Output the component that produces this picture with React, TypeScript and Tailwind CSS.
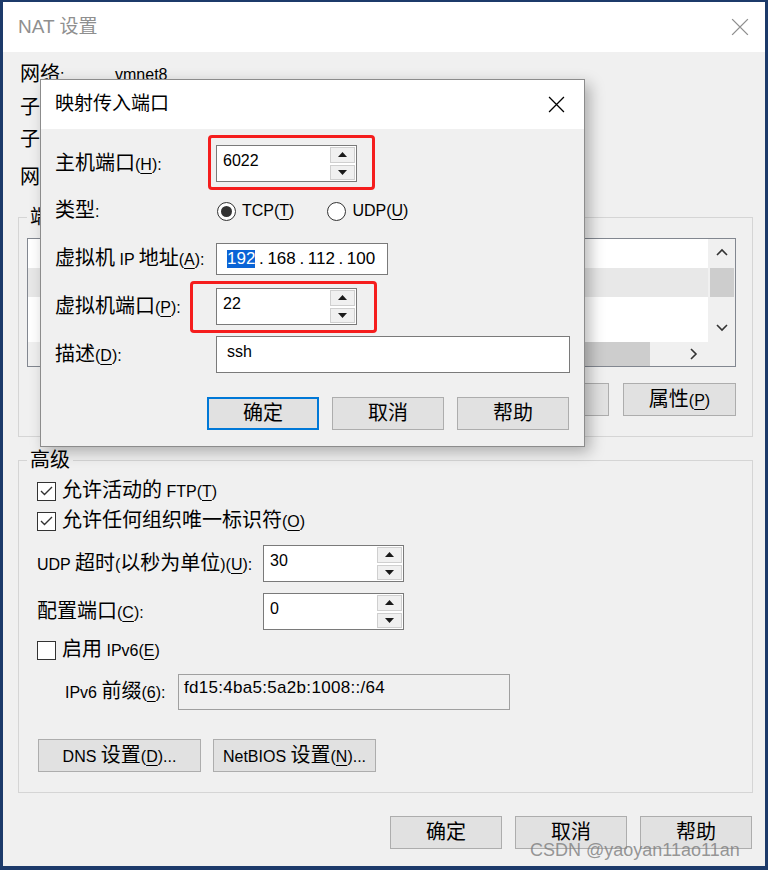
import clsx from "clsx";

const FONT = "font-['Liberation_Sans','Noto_Sans_CJK_SC',sans-serif]";

const isCJK = (c: string) => /[\u2e80-\u9fff\uff00-\uffef]/.test(c);

// "_X" marks an underlined access key; CJK runs get the larger size
function Txt({ s }: { s: string }) {
  const parts: { t: string; cjk: boolean; u: boolean }[] = [];
  for (let i = 0; i < s.length; i++) {
    let c = s[i];
    let u = false;
    if (c === "_" && i + 1 < s.length) {
      u = true;
      c = s[++i];
    }
    const cjk = isCJK(c);
    const last = parts[parts.length - 1];
    if (last && last.cjk === cjk && last.u === u) last.t += c;
    else parts.push({ t: c, cjk, u });
  }
  return (
    <span>
      {parts.map((p, i) => (
        <span
          key={i}
          className={clsx(
            p.cjk ? "text-[20px]" : "text-[16px]",
            p.u && "underline underline-offset-[3px]"
          )}
        >
          {p.t}
        </span>
      ))}
    </span>
  );
}

function XIcon({ color = "#000", size = 16 }: { color?: string; size?: number }) {
  return (
    <svg width={size} height={size} viewBox="0 0 16 16">
      <path d="M1 1L15 15M15 1L1 15" stroke={color} strokeWidth="1.2" fill="none" />
    </svg>
  );
}

function Tri({ up }: { up?: boolean }) {
  return (
    <svg width="9" height="5" viewBox="0 0 9 5">
      <polygon points={up ? "0,5 9,5 4.5,0" : "0,0 9,0 4.5,5"} fill="#1a1a1a" />
    </svg>
  );
}

function Chev({ dir }: { dir: "up" | "down" | "right" }) {
  const pts = dir === "up" ? "1,7 6,2 11,7" : dir === "down" ? "1,3 6,8 11,3" : "3,1 8,6 3,11";
  return (
    <svg width="12" height="12" viewBox="0 0 12 12">
      <polyline points={pts} fill="none" stroke="#333" strokeWidth="1.6" />
    </svg>
  );
}

function Spin({ value }: { value: string }) {
  return (
    <div className="flex h-[37px] w-[141px] border border-[#7a7a7a] bg-white">
      <div className="flex-1 pl-[6px] pt-[5px] text-[16px] leading-[20px]">{value}</div>
      <div className="flex w-[26px] flex-col gap-[2px] py-[1px] pr-[1px]">
        <div className="flex flex-1 items-center justify-center border border-[#cfcfcf] bg-[#f0f0f0]">
          <Tri up />
        </div>
        <div className="flex flex-1 items-center justify-center border border-[#cfcfcf] bg-[#f0f0f0]">
          <Tri />
        </div>
      </div>
    </div>
  );
}

function Btn({ s, w = "w-[112px]", focus }: { s: string; w?: string; focus?: boolean }) {
  return (
    <button
      type="button"
      className={clsx(
        "flex h-[33px] items-center justify-center bg-[#e1e1e1] leading-[24px]",
        w,
        focus ? "border-2 border-[#0078d7]" : "border border-[#adadad]"
      )}
    >
      <Txt s={s} />
    </button>
  );
}

function Check({ on }: { on?: boolean }) {
  return (
    <span className="flex h-[19px] w-[19px] shrink-0 items-center justify-center border border-[#333] bg-white">
      {on && (
        <svg width="13" height="10" viewBox="0 0 13 10">
          <polyline points="1,5 4.5,8.5 12,1" fill="none" stroke="#333" strokeWidth="1.4" />
        </svg>
      )}
    </span>
  );
}

function Radio({ on }: { on?: boolean }) {
  return (
    <span className="flex h-[19px] w-[19px] shrink-0 items-center justify-center rounded-full border border-[#333] bg-white">
      {on && <span className="h-[11px] w-[11px] rounded-full bg-[#333]" />}
    </span>
  );
}

const infoRows = [
  { label: "网络:", value: "vmnet8", mt: "mt-[8px]" },
  { label: "子网 IP:", value: "192.168.112.0", mt: "mt-[3px]" },
  { label: "子网掩码:", value: "255.255.255.0", mt: "mt-[2px]" },
  { label: "网关 IP(_G):", value: "192.168.112.2", mt: "mt-[8px]" },
];

export default function App() {
  return (
    <div className={clsx("relative h-[870px] w-[768px] overflow-hidden bg-[#1c3a6a] pl-[3px] pt-[2px] text-black", FONT)}>
      {/* NAT window */}
      <div className="flex h-[864px] w-[762px] flex-col bg-[#f0f0f0]">
        <div className="flex h-[50px] shrink-0 items-center justify-between bg-white pl-[15px] pr-[16px]">
          <span className="text-[19px] text-[#8f8f8f]">NAT 设置</span>
          <XIcon color="#8f8f8f" size={18} />
        </div>

        <div className="flex flex-col pl-[17px]">
          {infoRows.map((r) => (
            <div key={r.label} className={clsx("flex h-[30px] items-center leading-[24px]", r.mt)}>
              <span className="w-[95px]">
                <Txt s={r.label} />
              </span>
              <span className="text-[16px]">{r.value}</span>
            </div>
          ))}
        </div>

        {/* port forwarding group */}
        <fieldset className="ml-[15px] mt-[12px] w-[735px] border border-[#d5d5d5] pb-[20px]">
          <legend className="ml-[8px] h-[24px] px-[3px] leading-[24px]">
            <Txt s="端口转发(_F)" />
          </legend>
          <div className="ml-[8px] mr-[16px] mt-[9px] flex h-[129px] flex-col border border-[#828790] bg-white">
            <div className="flex flex-1">
              <div className="flex flex-1 flex-col">
                <div className="h-[29px]" />
                <div className="h-[29px] bg-[#e8e8e8]" />
                <div className="flex-1" />
              </div>
              <div className="flex w-[27px] flex-col items-center bg-[#f0f0f0]">
                <div className="flex h-[29px] items-center">
                  <Chev dir="up" />
                </div>
                <div className="h-[29px] w-[24px] bg-[#cdcdcd]" />
                <div className="flex-1" />
                <div className="flex h-[29px] items-center">
                  <Chev dir="down" />
                </div>
              </div>
            </div>
            <div className="flex h-[24px] bg-[#f0f0f0]">
              <div className="ml-[24px] w-[598px] bg-[#cdcdcd]" />
              <div className="flex-1" />
              <div className="flex w-[27px] items-center justify-center">
                <Chev dir="right" />
              </div>
              <div className="w-[28px]" />
            </div>
          </div>
          <div className="mt-[16px] flex justify-end gap-[14px] pr-[16px]">
            <Btn s="添加(_A)..." w="w-[113px]" />
            <Btn s="移除(_R)" w="w-[113px]" />
            <Btn s="属性(_P)" w="w-[113px]" />
          </div>
        </fieldset>

        {/* advanced group */}
        <fieldset className="ml-[15px] mt-[11px] w-[735px] border border-[#d5d5d5] pb-[20px] pl-[18px]">
          <legend className="ml-[-10px] h-[24px] px-[3px] leading-[24px]">
            <Txt s="高级" />
          </legend>
          <div className="mt-[6px] flex h-[26px] items-center gap-[6px] leading-[24px]">
            <Check on />
            <Txt s="允许活动的 FTP(_T)" />
          </div>
          <div className="mt-[4px] flex h-[26px] items-center gap-[6px] leading-[24px]">
            <Check on />
            <Txt s="允许任何组织唯一标识符(_O)" />
          </div>
          <div className="mt-[11px] flex items-center leading-[24px]">
            <span className="w-[226px]">
              <Txt s="UDP 超时(以秒为单位)(_U):" />
            </span>
            <Spin value="30" />
          </div>
          <div className="mt-[11px] flex items-center leading-[24px]">
            <span className="w-[226px]">
              <Txt s="配置端口(_C):" />
            </span>
            <Spin value="0" />
          </div>
          <div className="mt-[7px] flex h-[26px] items-center gap-[6px] leading-[24px]">
            <Check />
            <Txt s="启用 IPv6(_E)" />
          </div>
          <div className="mt-[11px] flex h-[36px] items-center pl-[28px] leading-[24px]">
            <span className="w-[113px]">
              <Txt s="IPv6 前缀(_6):" />
            </span>
            <div className="h-[36px] w-[332px] border border-[#a0a0a0] bg-[#f0f0f0] pl-[5px] pt-[3px] text-[17px] leading-[20px] tracking-[0.3px]">
              fd15:4ba5:5a2b:1008::/64
            </div>
          </div>
          <div className="ml-[1px] mt-[29px] flex gap-[12px]">
            <Btn s="DNS 设置(_D)..." w="w-[163px]" />
            <Btn s="NetBIOS 设置(_N)..." w="w-[163px]" />
          </div>
        </fieldset>

        <div className="mt-[23px] flex justify-end gap-[13px] pr-[13px]">
          <Btn s="确定" />
          <Btn s="取消" />
          <Btn s="帮助" />
        </div>
      </div>

      {/* port mapping dialog */}
      <div className="absolute left-[40px] top-[79px] flex h-[368px] w-[545px] flex-col border border-[#8c8c8c] bg-[#f0f0f0] shadow-[5px_5px_14px_rgba(0,0,0,0.28)]">
        <div className="flex h-[49px] shrink-0 items-center justify-between bg-white pl-[14px] pr-[19px]">
          <span className="text-[19px]">映射传入端口</span>
          <XIcon size={17} />
        </div>
        <div className="flex flex-col pl-[14px] pr-[14px] pt-[16px] leading-[24px]">
          <div className="flex h-[37px] items-center">
            <span className="w-[161px]">
              <Txt s="主机端口(_H):" />
            </span>
            <Spin value="6022" />
          </div>
          <div className="mt-[5px] flex h-[48px] items-center">
            <span className="w-[162px]">
              <Txt s="类型:" />
            </span>
            <span className="flex items-center gap-[6px]">
              <Radio on />
              <Txt s="TCP(_T)" />
            </span>
            <span className="ml-[33px] flex items-center gap-[6px]">
              <Radio />
              <Txt s="UDP(_U)" />
            </span>
          </div>
          <div className="mt-[8px] flex h-[32px] items-center">
            <span className="w-[161px]">
              <Txt s="虚拟机 IP 地址(_A):" />
            </span>
            <div className="flex h-[32px] w-[172px] items-center border border-[#7a7a7a] bg-white pl-[10px] text-[17px] leading-[18px]">
              <span className="bg-[#0a64d6] text-white">192</span>
              <span className="w-[12px] text-center">.</span>
              <span>168</span>
              <span className="w-[12px] text-center">.</span>
              <span>112</span>
              <span className="w-[12px] text-center">.</span>
              <span>100</span>
            </div>
          </div>
          <div className="mt-[13px] flex h-[37px] items-center">
            <span className="w-[161px]">
              <Txt s="虚拟机端口(_P):" />
            </span>
            <Spin value="22" />
          </div>
          <div className="mt-[11px] flex h-[37px] items-center">
            <span className="w-[161px]">
              <Txt s="描述(_D):" />
            </span>
            <div className="h-[37px] w-[354px] border border-[#7a7a7a] bg-white pl-[10px] pt-[5px] text-[16px] leading-[20px]">
              ssh
            </div>
          </div>
          <div className="mt-[24px] flex justify-end gap-[13px] pr-[1px]">
            <Btn s="确定" focus />
            <Btn s="取消" />
            <Btn s="帮助" />
          </div>
        </div>
      </div>

      {/* red highlight marks */}
      <div className="absolute left-[208px] top-[135px] h-[55px] w-[167px] rounded-[4px] border-[3px] border-[#f51d1d]" />
      <div className="absolute left-[190px] top-[281px] h-[52px] w-[187px] rounded-[4px] border-[3px] border-[#f51d1d]" />

      {/* watermark */}
      <div className="absolute left-[530px] top-[839px] text-[18px] leading-[22px] text-[#7d7d7d]/80">
        CSDN @yaoyan11ao11an
      </div>
    </div>
  );
}
